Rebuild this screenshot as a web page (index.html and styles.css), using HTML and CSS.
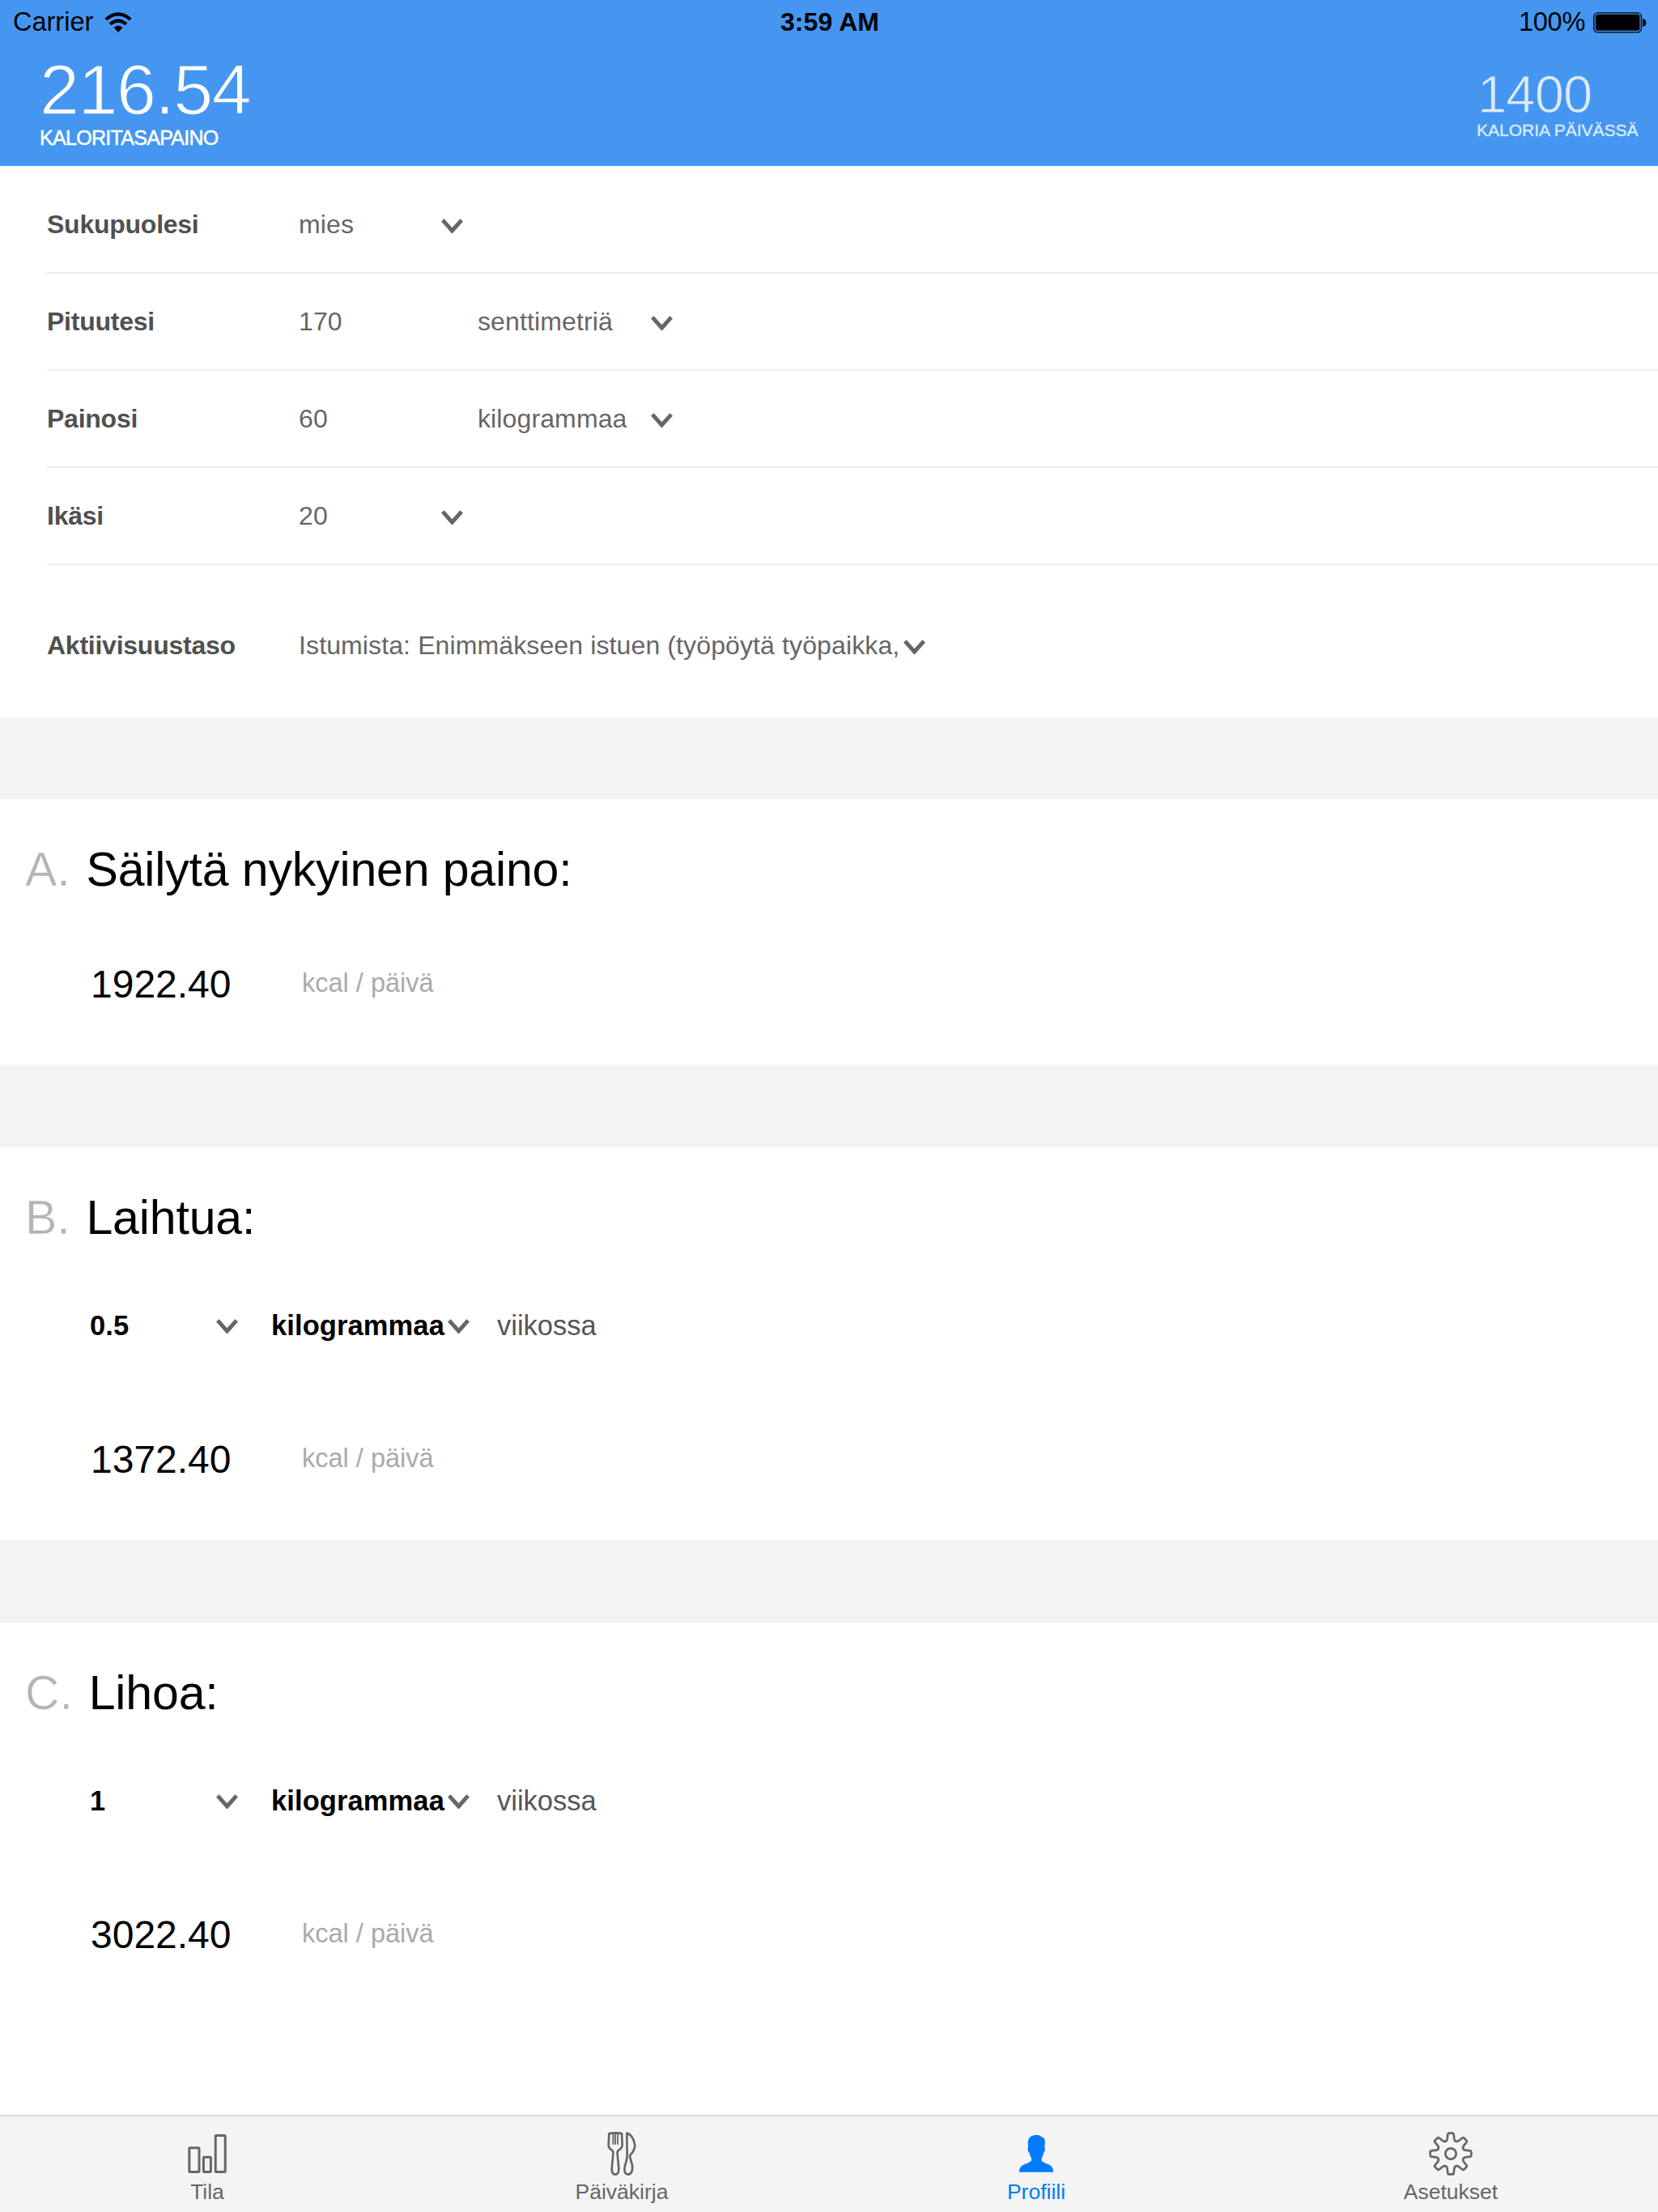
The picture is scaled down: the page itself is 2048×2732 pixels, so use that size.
FILE: index.html
```html
<!DOCTYPE html>
<html lang="fi">
<head>
<meta charset="utf-8">
<title>Profiili</title>
<link rel="stylesheet" href="styles.css">
</head>
<body>
<svg class="defs" width="0" height="0" aria-hidden="true">
  <symbol id="chevron" viewBox="0 0 27 18"><path d="M1.800 1.800 13.500 15 25.200 1.800" fill="none" stroke="#666" stroke-width="5"/></symbol>
  <path id="tooth" d="M-19-46Q-14-48-13-54L-11-72Q-10.500-76-7-76H7Q10.500-76 11-72L13-54Q14-48 19-46"/>
</svg>
<div class="screen">
  <header class="header">
    <div class="status">
      <div class="status-left"><span class="carrier">Carrier</span>
        <svg class="wifi" width="34" height="26" viewBox="0 0 34 26"><g fill="none" stroke="#000" stroke-width="4"><path d="M1.800 9Q17-4.200 32.200 9"/><path d="M7 14.800Q17 6.400 27 14.800"/></g><path d="M17 25 11.600 19Q17 14.600 22.400 19Z"/></svg>
      </div>
      <div class="clock">3:59 AM</div>
      <div class="status-right"><span class="percent">100%</span>
        <svg class="battery" width="66" height="26" viewBox="0 0 66 26"><rect x=".8" y=".8" width="58.600" height="24" rx="4.500" fill="none" stroke="#000" stroke-width="1.300"/><rect x="2.800" y="2.800" width="54.600" height="20" rx="2.500"/><path d="M61 8Q65.500 9 65.500 13T61 18Z"/></svg>
      </div>
    </div>
    <div class="totals">
      <div class="balance"><div class="balance-value">216.54</div><div class="balance-label">KALORITASAPAINO</div></div>
      <div class="daily"><div class="daily-value">1400</div><div class="daily-label">KALORIA PÄIVÄSSÄ</div></div>
    </div>
  </header>

  <main class="content">
    <section class="form">
      <div class="row"><b>Sukupuolesi</b><span>mies</span><svg class="chev"><use href="#chevron"/></svg></div>
      <div class="row"><b>Pituutesi</b><span>170</span><i></i><span>senttimetriä</span><svg class="chev"><use href="#chevron"/></svg></div>
      <div class="row"><b>Painosi</b><span>60</span><i></i><span>kilogrammaa</span><svg class="chev"><use href="#chevron"/></svg></div>
      <div class="row"><b>Ikäsi</b><span>20</span><svg class="chev"><use href="#chevron"/></svg></div>
      <div class="row activity"><b>Aktiivisuustaso</b><span>Istumista: Enimmäkseen istuen (työpöytä työpaikka,</span><svg class="chev"><use href="#chevron"/></svg></div>
    </section>

    <section class="plan plan-keep">
      <h2><span class="letter">A.</span>Säilytä nykyinen paino:</h2>
      <div class="result"><span class="kcal">1922.40</span><span class="unit">kcal / päivä</span></div>
    </section>

    <section class="plan">
      <h2><span class="letter">B.</span>Laihtua:</h2>
      <div class="rate"><b>0.5</b><svg class="chev"><use href="#chevron"/></svg><b>kilogrammaa</b><svg class="chev"><use href="#chevron"/></svg><span>viikossa</span></div>
      <div class="result"><span class="kcal">1372.40</span><span class="unit">kcal / päivä</span></div>
    </section>

    <section class="plan plan-last">
      <h2><span class="letter">C.</span>Lihoa:</h2>
      <div class="rate"><b>1</b><svg class="chev"><use href="#chevron"/></svg><b>kilogrammaa</b><svg class="chev"><use href="#chevron"/></svg><span>viikossa</span></div>
      <div class="result"><span class="kcal">3022.40</span><span class="unit">kcal / päivä</span></div>
    </section>
  </main>

  <nav class="tabs">
    <a class="tab">
      <svg width="60" height="60" viewBox="0 0 60 60" fill="none" stroke="currentColor" stroke-width="3"><rect x="7.800" y="21.800" width="12.200" height="29.600" rx="1"/><rect x="25.400" y="33.200" width="9" height="18.200" rx="1"/><rect x="40.200" y="6.500" width="12" height="44.900" rx="1"/></svg>
      <span>Tila</span></a>
    <a class="tab">
      <svg width="60" height="60" viewBox="144 93 180 180" fill="none" stroke="currentColor" stroke-width="8" stroke-linejoin="round"><path d="M187 105Q210 101 234 105Q235 125 236 148Q235 160 221 168Q217 172 218 182L223 235Q223 257 210 257T197 235L202 182Q203 172 199 168Q185 160 185 148Q186 125 187 105Z"/><path d="M202 106V146M210 106V146M219 106V146" stroke-width="5.500"/><path d="M253 104Q276 109 283 150Q281 170 264 187Q264 195 273 222Q276 256 257 257Q239 254 246 224Q254 200 254 186Z"/></svg>
      <span>Päiväkirja</span></a>
    <a class="tab active">
      <svg width="60" height="60" viewBox="150 93 180 180" fill="currentColor"><path d="M240 111C252 111 256 114 260 119C270 119 273 126 272 142L271 157C274 160 272 172 267 178Q265 190 260 195V206Q266 213 286 220Q304 228 303 248H177Q176 228 195 220Q216 213 222 206V195Q217 190 215 178C209 172 207 160 210 157L209 142C208 122 220 111 240 111Z"/></svg>
      <span>Profiili</span></a>
    <a class="tab">
      <svg width="60" height="60" viewBox="-90 -87 180 180" fill="none" stroke="currentColor" stroke-width="8" stroke-linecap="round"><circle r="20"/><use href="#tooth"/><use href="#tooth" transform="rotate(45)"/><use href="#tooth" transform="rotate(90)"/><use href="#tooth" transform="rotate(135)"/><use href="#tooth" transform="rotate(180)"/><use href="#tooth" transform="rotate(225)"/><use href="#tooth" transform="rotate(270)"/><use href="#tooth" transform="rotate(315)"/></svg>
      <span>Asetukset</span></a>
  </nav>
</div>
</body>
</html>
```
FILE: styles.css
```css
* { box-sizing: border-box; }
body { margin: 0; font-family: "Liberation Sans", Arial, sans-serif; color: #000; background: #fff; }
.defs { position: absolute; }
.screen { width: 2048px; height: 2732px; display: flex; flex-direction: column; overflow: hidden; }
svg { flex: none; }

.header { height: 205px; flex: none; background: #4596f1; }
.status { height: 54px; padding: 0 14px 0 16px; display: grid; grid-template-columns: 1fr auto 1fr; line-height: 55px; font-size: 32.5px; }
.status-left, .status-right { display: flex; align-items: center; }
.status-right { justify-content: flex-end; gap: 10px; }
.wifi { margin-left: 14px; }
.clock { font-weight: bold; font-size: 32px; letter-spacing: 0.1px; }
.percent { letter-spacing: -0.3px; }
.totals { display: flex; justify-content: space-between; color: #fff; }
.balance { padding: 17px 0 0 49px; }
.balance-value { height: 81px; line-height: 80px; font-size: 88px; letter-spacing: -1.5px; -webkit-text-stroke: 1.4px #4596f1; }
.balance-label { line-height: 36px; font-size: 25px; letter-spacing: -0.7px; -webkit-text-stroke: 0.5px #fff; }
.daily { width: 224px; padding-top: 32px; color: #dbeafc; }
.daily-value { height: 60px; padding-left: 1px; line-height: 61px; font-size: 65px; letter-spacing: -0.8px; -webkit-text-stroke: 1px #4596f1; }
.daily-label { line-height: 30px; font-size: 21px; -webkit-text-stroke: 0.4px #dbeafc; }

.content { flex: 1; display: flex; flex-direction: column; gap: 102px; background: #f2f3f5; }
.form { height: 681px; margin-bottom: -1px; padding: 13px 0 0 58px; background: #fff; font-size: 32px; }
.row { height: 120px; display: grid; grid-template-columns: 311px 176px 45px 214px auto; align-items: center; line-height: 118px; border-bottom: 2px solid #ececec; color: #666; }
.row b { color: #505050; letter-spacing: -0.25px; }
.row span { letter-spacing: 0.12px; white-space: nowrap; }
.chev { width: 27px; height: 22px; padding-top: 4px; }
.activity { height: 158px; padding-top: 40px; grid-template-columns: 311px 747px auto; border: 0; }

.plan { height: 485px; padding-top: 47px; background: #fff; }
.plan-keep { height: 328px; }
.plan-last { flex: 1; }
h2 { margin: 0; padding-left: 31px; line-height: 80px; font-size: 59px; font-weight: normal; letter-spacing: -0.15px; }
.letter { margin-right: 20px; color: #b4b4b4; -webkit-text-stroke: 0.5px #fff; }
.rate { height: 80px; margin-top: 53px; padding-left: 111px; display: grid; grid-template-columns: 156px 68px 218px 61px auto; align-items: center; line-height: 80px; font-size: 34.500px; }
.rate b { white-space: nowrap; letter-spacing: 0.1px; }
.rate .chev { height: 20px; padding-top: 2px; }
.rate span { color: #555; }
.result { height: 80px; margin-top: 86px; padding-left: 112px; display: flex; }
.plan-keep .result { margin-top: 62px; }
.kcal { width: 261px; line-height: 80px; font-size: 48px; }
.unit { line-height: 76px; font-size: 32.500px; color: #aaa; }

.tabs { height: 120px; flex: none; display: grid; grid-template-columns: repeat(4, 1fr); border-top: 2px solid #dcdcdc; background: #f4f4f4; }
.tab { display: flex; flex-direction: column; align-items: center; padding-top: 17px; color: #666; font-size: 26.500px; line-height: 32px; }
.active { color: #007aff; }
```
